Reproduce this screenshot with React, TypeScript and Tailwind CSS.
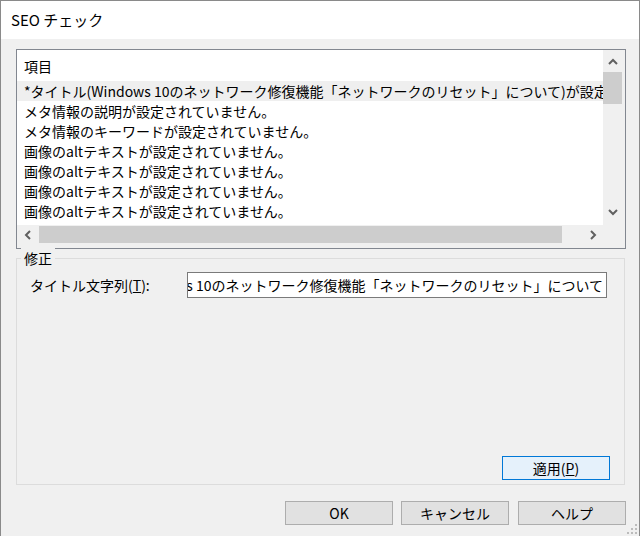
import React from "react";

const font = { fontFamily: '"Noto Sans CJK JP", "Noto Sans", sans-serif' };

function Chevron({ dir }: { dir: "up" | "down" | "left" | "right" }) {
  const pts: Record<string, string> = {
    up: "1,6 5,2 9,6",
    down: "1,2 5,6 9,2",
    left: "6,1 2,5 6,9",
    right: "2,1 6,5 2,9",
  };
  const vertical = dir === "up" || dir === "down";
  return (
    <svg
      width={vertical ? 10 : 8}
      height={vertical ? 8 : 10}
      viewBox={vertical ? "0 0 10 8" : "0 0 8 10"}
    >
      <polyline points={pts[dir]} fill="none" stroke="#606060" strokeWidth="2" />
    </svg>
  );
}

const rows = [
  "*タイトル(Windows 10のネットワーク修復機能「ネットワークのリセット」について)が設定されていません。",
  "メタ情報の説明が設定されていません。",
  "メタ情報のキーワードが設定されていません。",
  "画像のaltテキストが設定されていません。",
  "画像のaltテキストが設定されていません。",
  "画像のaltテキストが設定されていません。",
  "画像のaltテキストが設定されていません。",
];

export default function App() {
  return (
    <div
      className="relative w-[640px] h-[536px] overflow-hidden bg-[#f0f0f0] border-l border-t border-r border-[#8a8a8a] text-black flex flex-col"
      style={font}
    >
      <div className="h-[38px] shrink-0 bg-white flex items-center pl-[10px] text-[15px]">
        SEO チェック
      </div>

      <div className="flex flex-col pl-[15px] pr-[13px]">
        {/* List box */}
        <div className="mt-[10px] w-[610px] h-[200px] border border-[#828790] flex flex-col bg-[#f0f0f0]">
          <div className="flex h-[175px]">
            <div className="flex-1 bg-white overflow-hidden text-[14px] leading-[20px]">
              <div className="h-[31px] flex items-center pl-[7px]">項目</div>
              {rows.map((r, i) => (
                <div
                  key={i}
                  className={`h-[20px] whitespace-nowrap pl-[7px] ${i === 0 ? "bg-[#efefef]" : ""}`}
                >
                  {r}
                </div>
              ))}
            </div>
            <div className="w-[22px] flex flex-col items-start">
              <div className="w-[19px] h-[22px] flex items-center justify-center pt-[2px]">
                <Chevron dir="up" />
              </div>
              <div className="w-[19px] h-[32px] bg-[#cdcdcd]" />
              <div className="flex-1" />
              <div className="w-[19px] h-[22px] flex items-center justify-center pb-[4px]">
                <Chevron dir="down" />
              </div>
            </div>
          </div>
          <div className="flex-1 flex items-start pt-[1px]">
            <div className="w-[22px] h-[17px] flex items-center justify-center">
              <Chevron dir="left" />
            </div>
            <div className="w-[523px] h-[17px] bg-[#cdcdcd]" />
            <div className="w-[41px] h-[17px] flex items-center justify-end pr-[6px]">
              <Chevron dir="right" />
            </div>
          </div>
        </div>

        {/* Group box */}
        <div className="relative mt-[9px] w-[609px] h-[227px] border border-[#dcdcdc] flex flex-col">
          <div className="absolute left-[4px] top-[-11px] px-[3px] bg-[#f0f0f0] text-[14px] leading-[20px]">
            修正
          </div>
          <div className="mt-[13px] flex items-center pl-[13px]">
            <div className="w-[157px] text-[14px] whitespace-nowrap">
              タイトル文字列(<span className="underline">T</span>):
            </div>
            <div className="w-[420px] h-[26px] border border-[#7a7a7a] bg-white overflow-hidden flex items-center justify-end pr-[3px]">
              <span className="whitespace-nowrap text-[14px]">
                Windows 10のネットワーク修復機能「ネットワークのリセット」について
              </span>
            </div>
          </div>
          <div className="mt-auto mb-[4px] flex justify-end pr-[14px]">
            <div className="w-[108px] h-[24px] border border-[#0078d7] bg-[#e5f1fb] flex items-center justify-center text-[14px]">
              適用(<span className="underline">P</span>)
            </div>
          </div>
        </div>

        {/* Bottom buttons */}
        <div className="mt-[16px] flex justify-end pr-[0px]">
          <div className="w-[108px] h-[24px] border border-[#adadad] bg-[#e1e1e1] flex items-center justify-center text-[14px]">
            OK
          </div>
          <div className="ml-[8px] w-[108px] h-[24px] border border-[#adadad] bg-[#e1e1e1] flex items-center justify-center text-[14px]">
            キャンセル
          </div>
          <div className="ml-[9px] w-[108px] h-[24px] border border-[#adadad] bg-[#e1e1e1] flex items-center justify-center text-[14px]">
            ヘルプ
          </div>
        </div>
      </div>

      {/* resize grip */}
      <svg className="absolute right-[1px] bottom-[1px]" width="11" height="11" viewBox="0 0 11 11">
        {[
          [8, 0],
          [8, 4],
          [4, 4],
          [8, 8],
          [4, 8],
          [0, 8],
        ].map(([x, y], i) => (
          <rect key={i} x={x} y={y} width="2" height="2" fill="#bcbcbc" />
        ))}
      </svg>
    </div>
  );
}
